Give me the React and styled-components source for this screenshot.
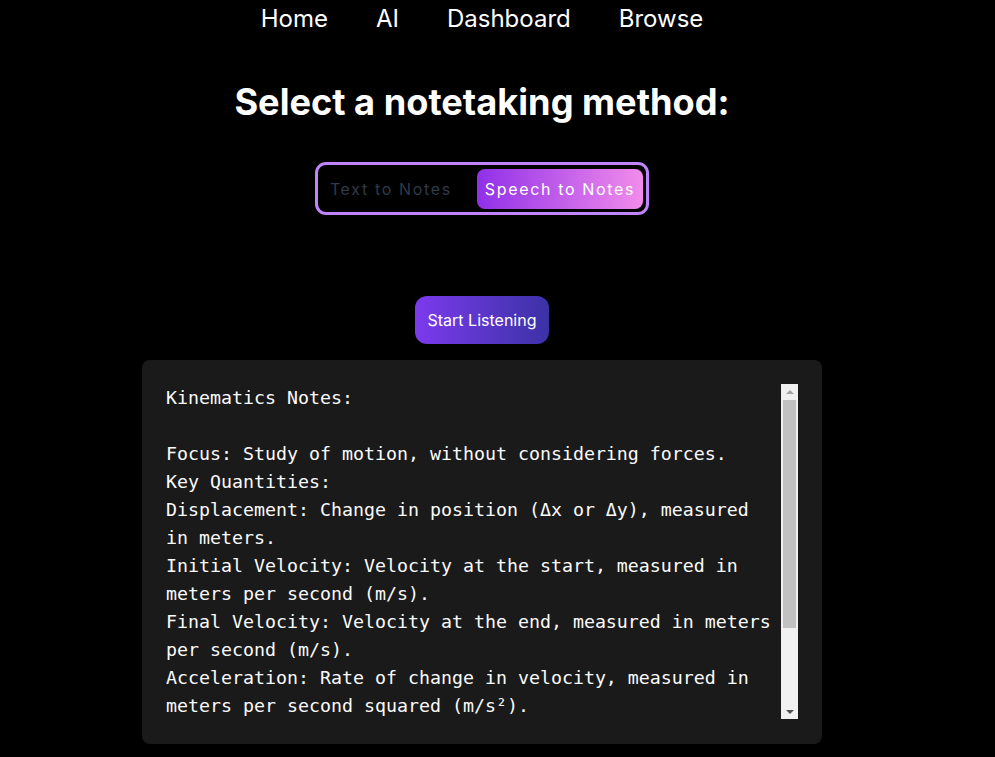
import React, { useState } from 'react';
import styled, { createGlobalStyle } from 'styled-components';

const GlobalStyle = createGlobalStyle`
  html, body {
    margin: 0;
    padding: 0;
    background: #000;
  }
  body {
    font-family: Inter, 'Noto Sans', sans-serif;
    color: #fff;
  }
`;

const notes = `Kinematics Notes:

Focus: Study of motion, without considering forces.
Key Quantities:
Displacement: Change in position (Δx or Δy), measured in meters.
Initial Velocity: Velocity at the start, measured in meters per second (m/s).
Final Velocity: Velocity at the end, measured in meters per second (m/s).
Acceleration: Rate of change in velocity, measured in meters per second squared (m/s²).
Time: Duration of the motion, measured in seconds (s).
Key Equations:
v = u + at
s = ut + ½at²`;

const Page = styled.div`
  width: 964px;
  min-height: 757px;
  display: flex;
  flex-direction: column;
  align-items: center;
`;

const Nav = styled.nav`
  display: flex;
  gap: 48px;
  height: 36px;
  align-items: center;
`;

const NavLink = styled.a`
  font-size: 24px;
  color: #fff;
  text-decoration: none;
  cursor: pointer;
`;

const Heading = styled.h1`
  margin: 44px 0 0;
  font-size: 36.2px;
  line-height: 44px;
  font-weight: 700;
`;

const Toggle = styled.div`
  margin-top: 38px;
  display: flex;
  gap: 17px;
  padding: 4px 3px 3px 4px;
  border: 3px solid #c084fc;
  border-radius: 11px;
`;

const ToggleButton = styled.button`
  border: none;
  border-radius: 8px;
  padding: 8px 8px;
  font-family: Inter, sans-serif;
  font-size: 16px;
  line-height: 24px;
  letter-spacing: 1.65px;
  cursor: pointer;
  color: ${p => (p.$active ? '#fff' : '#2f3a4a')};
  background: ${p => (p.$active ? 'linear-gradient(to right, #9030e8, #f28ceb)' : 'transparent')};
`;

const ListenButton = styled.button`
  margin-top: 81px;
  border: none;
  border-radius: 12px;
  padding: 12px 13px;
  font-family: Inter, sans-serif;
  font-size: 16px;
  line-height: 24px;
  color: #fff;
  background: linear-gradient(to right, #7c3aed, #3b32a6);
  cursor: pointer;
`;

const NotesBox = styled.div`
  margin-top: 16px;
  width: 680px;
  box-sizing: border-box;
  padding: 24px 24px 25px;
  background: #1a1a1a;
  border-radius: 8px;
  display: flex;
  height: 384px;
`;

const NotesArea = styled.textarea`
  display: block;
  flex: 1;
  height: 335px;
  box-sizing: border-box;
  padding: 0;
  margin: 0;
  border: none;
  outline: none;
  resize: none;
  background: transparent;
  color: #fafafa;
  font-family: 'DejaVu Sans Mono', 'Liberation Mono', monospace;
  font-size: 18.27px;
  line-height: 28px;
  overflow-y: scroll;
  scrollbar-width: none;
`;

const ScrollBar = styled.div`
  width: 17px;
  height: 335px;
  background: #f1f1f1;
  display: flex;
  flex-direction: column;
`;

const ScrollButton = styled.div`
  height: 16px;
  display: flex;
  align-items: center;
  justify-content: center;

  &::before {
    content: '';
    width: 0;
    height: 0;
    border-left: 4px solid transparent;
    border-right: 4px solid transparent;
    ${p =>
      p.$down
        ? 'border-top: 4px solid #505050; margin-top: 1px;'
        : 'border-bottom: 4px solid #a3a3a3; margin-top: -1px;'}
  }
`;

const ScrollTrack = styled.div`
  flex: 1;
  padding: 0 2px;
`;

const ScrollThumb = styled.div`
  height: 228px;
  background: #c1c1c1;
`;

export default function App() {
  const [mode, setMode] = useState('speech');
  return (
    <>
      <GlobalStyle />
      <Page>
        <Nav>
          <NavLink>Home</NavLink>
          <NavLink>AI</NavLink>
          <NavLink>Dashboard</NavLink>
          <NavLink>Browse</NavLink>
        </Nav>
        <Heading>Select a notetaking method:</Heading>
        <Toggle>
          <ToggleButton $active={mode === 'text'} onClick={() => setMode('text')}>
            Text to Notes
          </ToggleButton>
          <ToggleButton $active={mode === 'speech'} onClick={() => setMode('speech')}>
            Speech to Notes
          </ToggleButton>
        </Toggle>
        <ListenButton>Start Listening</ListenButton>
        <NotesBox>
          <NotesArea defaultValue={notes} spellCheck={false} />
          <ScrollBar>
            <ScrollButton />
            <ScrollTrack>
              <ScrollThumb />
            </ScrollTrack>
            <ScrollButton $down />
          </ScrollBar>
        </NotesBox>
      </Page>
    </>
  );
}
